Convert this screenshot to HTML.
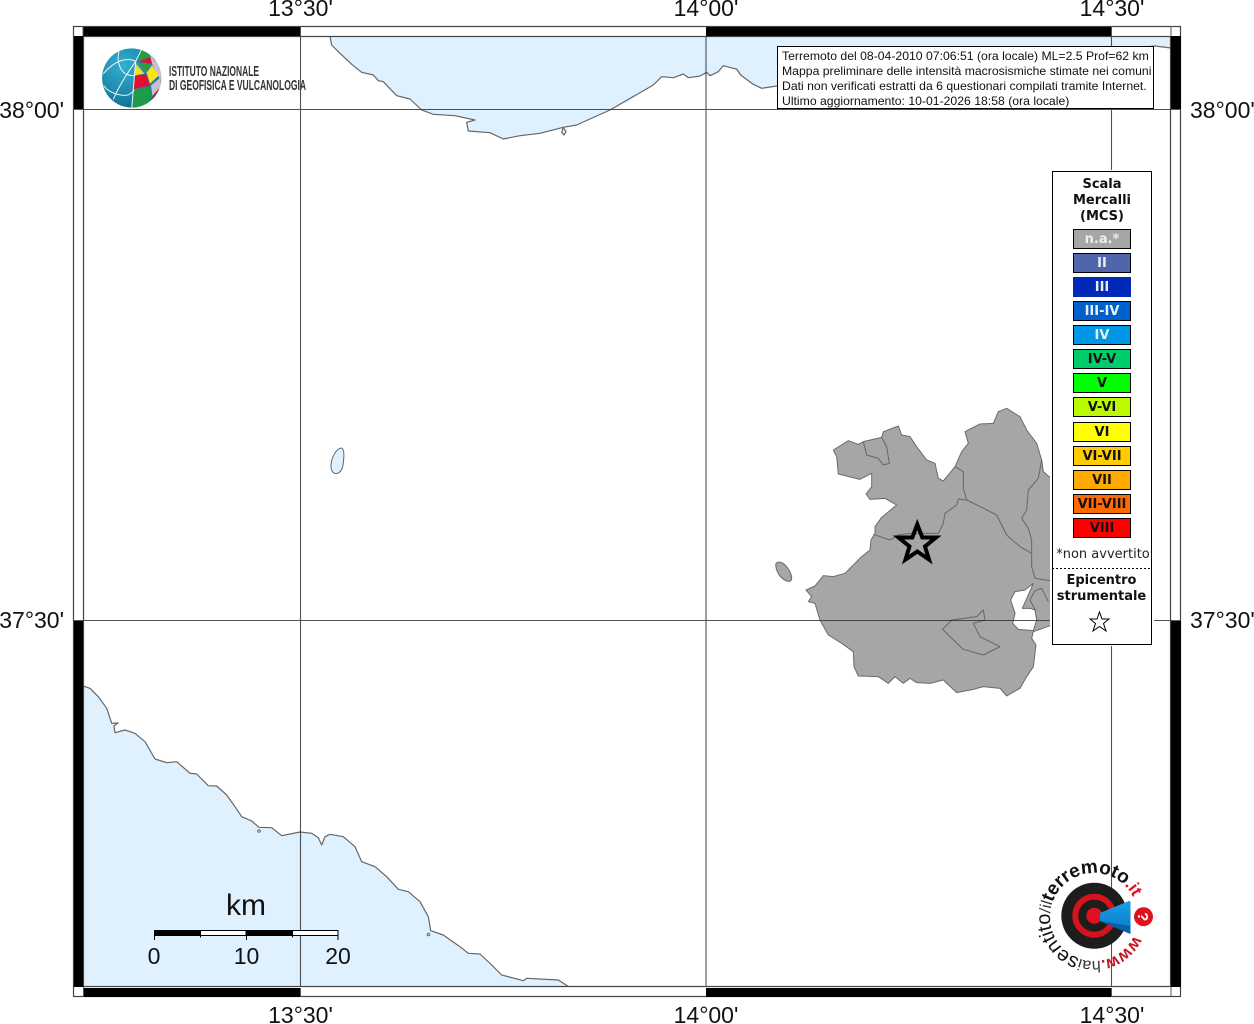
<!DOCTYPE html>
<html><head><meta charset="utf-8">
<style>
html,body{margin:0;padding:0;background:#fff;width:1254px;height:1024px;overflow:hidden}
svg{display:block}
.t{font-family:"Liberation Sans",sans-serif;font-size:23px;fill:#111}
.b{font-family:"Liberation Sans",sans-serif;font-size:12.22px;fill:#111}
.d{font-family:"DejaVu Sans",sans-serif;font-size:13px;font-weight:bold;text-anchor:middle;fill:#111}
.w{fill:#eee}
.s{stroke:#000;stroke-width:1}
</style></head><body>
<svg width="1254" height="1024" viewBox="0 0 1254 1024" xmlns="http://www.w3.org/2000/svg">
<defs>
<clipPath id="map"><rect x="83" y="36" width="1088" height="951"/></clipPath>
<clipPath id="box"><rect x="778" y="47" width="375.5" height="61"/></clipPath>
<clipPath id="globe"><circle cx="110" cy="108" r="89"/></clipPath>
<radialGradient id="gb" cx="35%" cy="30%" r="80%"><stop offset="0" stop-color="#33b0cf"/><stop offset=".7" stop-color="#1780a6"/><stop offset="1" stop-color="#0f5f80"/></radialGradient>
<linearGradient id="bl" x1="0" y1="0" x2="0" y2="1"><stop offset="0" stop-color="#18a0e8"/><stop offset="1" stop-color="#0a78c8"/></linearGradient>
</defs>
<g clip-path="url(#map)">
<!-- top sea -->
<g transform="translate(320,25) scale(.33333)" stroke-linejoin="round">
<path d="M30 33 L35 60 L60 85 L95 118 L125 142 L160 150 L175 167 L190 170 L230 212 L270 222 L305 255 L340 268 L405 272 L465 285 L440 292 L445 318 L510 323 L550 342 L600 332 L660 325 L730 307 L770 300 L870 255 L1000 180 L1025 155 L1060 158 L1090 147 L1105 158 L1140 153 L1160 142 L1170 152 L1195 140 L1210 122 L1240 130 L1250 132 L1262 150 L1300 178 L1325 190 L1370 183 L2505 63 L2560 70 L2560 0 L30 0 Z" fill="#dff1fe" stroke="#666" stroke-width="3.6"/>
<path d="M730 307 L725 322 L732 330 L738 320 Z" fill="#dff1fe" stroke="#666" stroke-width="3.6"/>
</g>
<!-- bottom sea -->
<path d="M83 686 L90 688.3 L98.3 696.7 L106.7 708.3 L111.7 723.3 L118 723 L114 726 L115 732.7 L125 730 L135 733.3 L145 741.7 L155 759 L166.7 762.7 L176.7 761.7 L190 773.3 L196.7 774 L208.3 785.7 L216.7 786 L226.7 795 L235 806.7 L241.7 816.7 L251.7 821 L259 827.3 L271.7 827.7 L281.7 835.7 L290 834 L300 832 L311.7 833.3 L318.3 837.7 L321.7 845 L325 836.7 L330 834.3 L343.3 836.7 L355 846.7 L361.7 861.7 L375 866.7 L386.7 876.7 L398.3 889.3 L408.3 891.7 L420 901.7 L428.3 916.7 L430.7 930.7 L443.3 935 L460 946.7 L468.3 953.3 L480 954 L491.7 965 L501.7 975 L523.3 980.7 L526.7 978.3 L558.3 980 L570 987.5 L83 987.5 Z" fill="#dff1fe" stroke="#666" stroke-width="1.2" stroke-linejoin="round"/>
<circle cx="428.5" cy="934.5" r="1.3" fill="none" stroke="#666"/>
<circle cx="259" cy="831" r="1.3" fill="none" stroke="#666"/>
<!-- small island -->
<path d="M331 466 C331 458 336 449 341 448 C345 448 344 458 343 465 C342 472 337 475 334 473 C332 472 331 470 331 466 Z" fill="#dff1fe" stroke="#666"/>
<!-- land -->
<g transform="translate(770,400) scale(.33333)" stroke-linejoin="round">
<path d="M190 150 L235 122 L265 133 L280 125 L335 112 L340 95 L385 78 L395 105 L420 110 L440 140 L470 180 L495 190 L505 235 L520 243 L555 200 L575 155 L595 130 L585 95 L630 72 L670 70 L685 35 L710 25 L750 50 L770 90 L800 130 L815 180 L820 215 L860 250 L860 670 L790 695 L785 715 L798 735 L790 800 L770 830 L750 865 L710 888 L690 865 L640 860 L610 868 L560 878 L520 840 L480 850 L440 848 L420 835 L400 850 L375 830 L355 850 L325 830 L265 828 L252 800 L250 755 L215 730 L175 705 L150 660 L135 610 L115 605 L125 590 L108 570 L135 558 L160 527 L190 530 L225 520 L275 470 L300 450 L303 420 L315 400 L315 380 L335 352 L380 315 L345 295 L300 298 L288 282 L305 260 L305 220 L270 238 L205 222 L200 170 Z" fill="#a6a6a6" stroke="#6a6a6a" stroke-width="3"/>
<path d="M790 550 L765 570 L735 575 L722 600 L735 640 L728 670 L745 688 L790 692 L800 660 L795 630 L780 625 L757 625 L775 585 Z" fill="#fff" stroke="#6a6a6a" stroke-width="3"/>
<path d="M18 490 C25 482 40 488 50 500 C60 512 68 530 64 540 C58 550 40 540 30 528 C22 518 15 500 18 490 Z" fill="#a6a6a6" stroke="#6a6a6a" stroke-width="3"/>
<g fill="none" stroke="#666" stroke-width="3">
<path d="M280 125 L290 165 L325 175 L340 195 L358 190 L350 140 L335 112"/>
<path d="M310 403 L360 420 L385 405 L420 400 L505 400 L520 370 L525 340 L560 315 L565 297 L590 300 L635 322 L680 345 L710 405 L750 440 L785 460"/>
<path d="M555 200 L580 215 L580 265 L590 300"/>
<path d="M815 180 L805 235 L775 270 L770 330 L755 355 L775 385 L785 420 L785 500 L795 535 L860 545"/>
<path d="M518 688 L545 660 L620 650 L640 630 L645 660 L610 670 L630 710 L690 740 L640 765 L580 748 L535 705 Z"/>
<path d="M797 632 L780 600 L795 572 L815 565 L835 605"/>
</g>
</g>
<!-- grid -->
<g stroke="#333" stroke-opacity=".85" stroke-width="1.1">
<path d="M83 109.5H1171M83 620.5H1171M300.5 36V987M706 36V987M1111.5 36V987"/>
</g>
<!-- epicentre star -->
<polygon points="917.3,524.5 922.3,537.5 936,537.5 925,546.5 929,559.5 917.3,551.5 905.5,559.5 909.5,546.5 898.5,537.5 912.3,537.5" fill="none" stroke="#000" stroke-width="4" stroke-miterlimit="10"/>
</g>
<!-- frame -->
<rect x="73.5" y="26.5" width="1107" height="970" fill="none" stroke="#444" stroke-width="1.2"/>
<rect x="83.5" y="36.5" width="1087" height="950" fill="none" stroke="#444" stroke-width="1.2"/>
<g fill="#000">
<rect x="83" y="27" width="217" height="9"/><rect x="706" y="27" width="405" height="9"/>
<rect x="83" y="988" width="217" height="9"/><rect x="706" y="988" width="405" height="9"/>
<rect x="74" y="36" width="9" height="73"/><rect x="74" y="620" width="9" height="367"/>
<rect x="1171" y="36" width="10" height="73"/><rect x="1171" y="620" width="10" height="367"/>
</g>
<path d="M83 26V36M1171 26V36M300.5 27V36M300.5 988V997M1111.5 27V36M1111.5 988V997M83.5 987V997M1171 987V997M74 109.5H83M1171 109.5H1181M74 620.5H83M1171 620.5H1181" stroke="#555" fill="none"/>
<!-- tick labels -->
<g class="t">
<text x="300.5" y="16" text-anchor="middle">13°30'</text><text x="706" y="16" text-anchor="middle">14°00'</text><text x="1112" y="16" text-anchor="middle">14°30'</text>
<text x="300.5" y="1023" text-anchor="middle">13°30'</text><text x="706" y="1023" text-anchor="middle">14°00'</text><text x="1112" y="1023" text-anchor="middle">14°30'</text>
<text x="64" y="118" text-anchor="end">38°00'</text><text x="64" y="628" text-anchor="end">37°30'</text>
<text x="1190" y="118">38°00'</text><text x="1190" y="628">37°30'</text>
</g>
<!-- INGV logo -->
<g transform="translate(95,42) scale(.33333)">
<g clip-path="url(#globe)">
<circle cx="110" cy="108" r="89" fill="url(#gb)"/>
<path d="M125 55 L140 22 L168 45 Z" fill="#2a9d3a"/>
<path d="M125 60 L166 45 L170 66 L150 62 Z" fill="#e01030"/>
<path d="M165 38 L205 85 L195 112 L172 68 Z" fill="#cdbdd0"/>
<path d="M130 62 L168 68 L150 90 Z" fill="#2a9d3a"/>
<path d="M122 65 L148 95 L118 100 Z" fill="#f6e11a"/>
<path d="M155 92 L171 70 L192 100 L165 125 Z" fill="#f6e11a"/>
<path d="M118 102 L153 96 L165 130 L115 142 Z" fill="#e01030"/>
<path d="M168 130 L198 105 L196 135 L172 162 Z" fill="#cdbdd0"/>
<path d="M115 145 L165 135 L172 165 L150 195 L110 200 Z" fill="#1f9a48"/>
<path d="M174 166 L192 140 L186 165 L165 192 Z" fill="#e01030"/>
<g fill="none" stroke="#e8f4f8" stroke-width="3">
<path d="M122 58 C118 100 115 150 110 198"/>
<path d="M122 58 C100 90 75 125 55 172"/>
<path d="M122 58 C95 45 60 55 25 95"/>
<path d="M122 58 L140 22"/>
<path d="M72 28 C65 55 72 80 90 95 C100 100 110 102 120 100"/>
<path d="M26 130 C35 145 60 160 90 160 C105 160 112 150 118 143"/>
</g>
</g>
</g>
<g font-family="'Liberation Sans',sans-serif" fill="#333" font-size="14.5" font-weight="bold">
<text x="169" y="76" textLength="90" lengthAdjust="spacingAndGlyphs">ISTITUTO NAZIONALE</text>
<text x="169" y="90" textLength="137" lengthAdjust="spacingAndGlyphs">DI GEOFISICA E VULCANOLOGIA</text>
</g>
<!-- info box -->
<rect x="777.5" y="46.5" width="376" height="62" fill="#fff" stroke="#000"/>
<g class="b" clip-path="url(#box)">
<text x="782" y="60">Terremoto del 08-04-2010 07:06:51 (ora locale) ML=2.5 Prof=62 km</text>
<text x="782" y="75">Mappa preliminare delle intensità macrosismiche stimate nei comuni</text>
<text x="782" y="90">Dati non verificati estratti da 6 questionari compilati tramite Internet.</text>
<text x="782" y="105">Ultimo aggiornamento: 10-01-2026 18:58 (ora locale)</text>
</g>
<!-- legend -->
<rect x="1050" y="170" width="104" height="476" fill="#fff"/>
<rect x="1052.5" y="171.5" width="99" height="473" fill="#fff" stroke="#000"/>
<text class="d" x="1102" y="188">Scala</text>
<text class="d" x="1102" y="204">Mercalli</text>
<text class="d" x="1102" y="220">(MCS)</text>
<g>
<rect class="s" x="1073.5" y="229.5" width="57" height="19" fill="#a6a6a6"/><text class="d w" x="1102" y="243">n.a.*</text>
<rect class="s" x="1073.5" y="253.5" width="57" height="19" fill="#5065ab"/><text class="d w" x="1102" y="267">II</text>
<rect x="1073" y="277" width="58" height="20" fill="#0029b8"/><text class="d w" x="1102" y="291">III</text>
<rect class="s" x="1073.5" y="301.5" width="57" height="19" fill="#0060cc"/><text class="d w" x="1102" y="315">III-IV</text>
<rect class="s" x="1073.5" y="325.5" width="57" height="19" fill="#0097e6"/><text class="d w" x="1102" y="339">IV</text>
<rect class="s" x="1073.5" y="349.5" width="57" height="19" fill="#00cc6b"/><text class="d" x="1102" y="363">IV-V</text>
<rect class="s" x="1073.5" y="373.5" width="57" height="19" fill="#00ff00"/><text class="d" x="1102" y="387">V</text>
<rect class="s" x="1073.5" y="397.5" width="57" height="19" fill="#bbfa00"/><text class="d" x="1102" y="411">V-VI</text>
<rect class="s" x="1073.5" y="422.5" width="57" height="19" fill="#ffff00"/><text class="d" x="1102" y="436">VI</text>
<rect class="s" x="1073.5" y="446.5" width="57" height="19" fill="#ffcc00"/><text class="d" x="1102" y="460">VI-VII</text>
<rect class="s" x="1073.5" y="470.5" width="57" height="19" fill="#ffaa00"/><text class="d" x="1102" y="484">VII</text>
<rect class="s" x="1073.5" y="494.5" width="57" height="19" fill="#ff6a00"/><text class="d" x="1102" y="508">VII-VIII</text>
<rect class="s" x="1073.5" y="518.5" width="57" height="19" fill="#ff0000"/><text class="d" x="1102" y="532">VIII</text>
</g>
<text x="1103" y="558" text-anchor="middle" font-family="'DejaVu Sans',sans-serif" font-size="13" fill="#222">*non avvertito</text>
<path d="M1052 568.5H1150" stroke="#000" stroke-dasharray="2 2"/>
<text class="d" x="1101.5" y="584">Epicentro</text>
<text class="d" x="1101.5" y="600">strumentale</text>
<polygon points="1099.5,612 1102,619 1109,619 1103.5,623.5 1106,631 1099.5,626.5 1093,631 1095.5,623.5 1090,619 1097,619" fill="#fff" stroke="#000" stroke-width="1"/>
<!-- scale bar -->
<rect x="154" y="930" width="46" height="6" fill="#000"/>
<rect x="200.5" y="930.5" width="45.5" height="5" fill="#fff" stroke="#000"/>
<rect x="246" y="930" width="46" height="6" fill="#000"/>
<rect x="292.5" y="930.5" width="45.5" height="5" fill="#fff" stroke="#000"/>
<path d="M154.5 930V940M246.5 930V940M338 930V940M200.5 935V937.5M292.5 935V937.5" stroke="#000" fill="none"/>
<g class="t">
<text x="154" y="964" text-anchor="middle">0</text>
<text x="246.5" y="964" text-anchor="middle">10</text>
<text x="338" y="964" text-anchor="middle">20</text>
<text x="246" y="915" text-anchor="middle" style="font-size:30px">km</text>
</g>
<!-- hai sentito logo -->
<circle cx="1094.3" cy="915.7" r="33" fill="#1d1d1b"/>
<circle cx="1094.3" cy="915.7" r="19" fill="none" stroke="#d5121e" stroke-width="6"/>
<circle cx="1094.3" cy="915.7" r="8" fill="#e30f1e"/>
<path d="M1100 913 L1129 901 Q1130.5 900.5 1130.5 903 L1130.5 932 Q1130.5 934 1128 933 L1100 921 Z" fill="url(#bl)"/>
<path d="M1100 921 L1130 926 L1130.5 934 Z" fill="#0560a8"/>
<circle cx="1143.5" cy="916.7" r="9.5" fill="#e30f1e"/>
<text x="1143.5" y="922" text-anchor="middle" font-family="'Liberation Sans',sans-serif" font-size="15" font-weight="bold" fill="#fff" transform="rotate(90 1143.5 916.7)">?</text>
<path id="ring" d="M1133.9 935.6 A44 44 0 1 1 1133.2 897" fill="none"/>
<text font-family="'Liberation Sans',sans-serif" font-size="18" fill="#111">
<textPath href="#ring" textLength="236" lengthAdjust="spacing"><tspan fill="#c8141e" font-weight="bold" font-size="17">www.</tspan><tspan font-size="16" fill="#333">hai</tspan><tspan font-size="20">sentito</tspan><tspan font-size="16" fill="#333">/il</tspan><tspan font-weight="bold" font-size="19">terremoto</tspan><tspan fill="#e30f1e" font-weight="bold" font-size="17">.it</tspan></textPath>
</text>
</svg>
</body></html>
